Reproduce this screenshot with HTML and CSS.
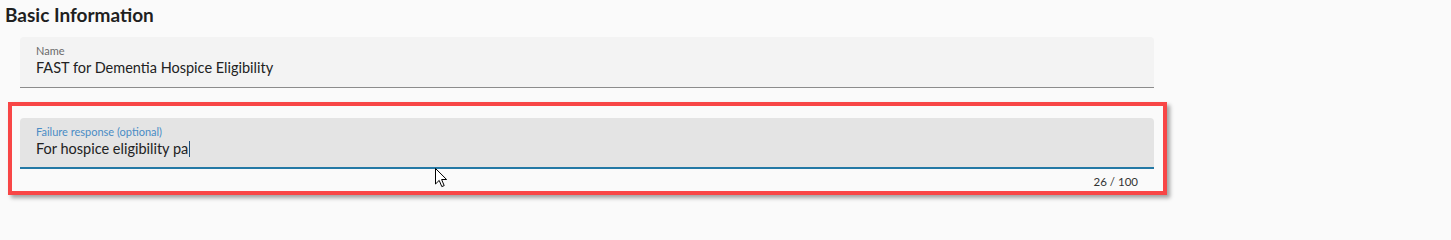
FILE: index.html
```html
<!DOCTYPE html>
<html lang="en">
<head>
<meta charset="utf-8">
<title>Basic Information</title>
<link rel="stylesheet" href="styles.css">
</head>
<body>
<div class="page">
  <h2 class="title">Basic Information</h2>
  <div class="form">
    <div class="field">
      <div class="label">Name</div>
      <div class="value">FAST for Dementia Hospice Eligibility</div>
    </div>
    <div class="highlight">
      <div class="field field-focused">
        <div class="label label-focused">Failure response (optional)</div>
        <div class="value">For hospice eligibility pa<span class="caret"></span></div>
      </div>
      <div class="helper">26 / 100</div>
      <svg class="pointer" width="13" height="20" viewBox="0 0 13 20">
        <path d="M0.5 0.5 L0.5 16 L4.2 12.4 L6.8 18.6 L9.2 17.6 L6.6 11.5 L11.6 11.5 Z" fill="#fff" stroke="#000" stroke-width="1"/>
      </svg>
    </div>
  </div>
</div>
</body>
</html>
```
FILE: styles.css
```css
html, body {
  margin: 0;
  padding: 0;
  background: #fafafa;
}
body {
  min-height: 206px;
  font-family: Lato, "Open Sans", sans-serif;
  color: #222;
}
.page {
  padding: 3px 0 12px 5px;
}
.title {
  margin: 0;
  font-size: 19px;
  line-height: 23px;
  font-weight: 700;
  color: #1f1f1f;
}
.form {
  margin: 11px 0 0 15px;
  width: 1134px;
}
.field {
  box-sizing: border-box;
  height: 51px;
  padding: 7px 16px 0 16px;
  background: #f3f3f3;
  border-radius: 4px 4px 0 0;
  border-bottom: 1px solid #8c8c8c;
}
.field-focused {
  background: #e4e4e4;
  border-bottom: 2px solid #2479a5;
}
.label {
  font-size: 11px;
  line-height: 13px;
  color: #6a6a6a;
}
.label-focused {
  color: #4a8cc4;
}
.value {
  margin-top: 1px;
  font-size: 14.5px;
  line-height: 19px;
  color: #222;
}
.caret {
  display: inline-block;
  width: 1px;
  height: 16px;
  margin-left: 1px;
  background: #1d4f7d;
  vertical-align: -3px;
}
.highlight {
  position: relative;
  margin-top: 30px;
}
.highlight::after {
  content: "";
  position: absolute;
  top: -16px;
  left: -12px;
  right: -13px;
  bottom: -7px;
  border: 4px solid #f84646;
  box-shadow: 3px 3px 4px rgba(0, 0, 0, 0.35);
  pointer-events: none;
}
.helper {
  padding: 6px 16px 0 0;
  text-align: right;
  font-size: 11.5px;
  line-height: 13px;
  color: #333;
}
.pointer {
  position: absolute;
  left: 415px;
  top: 50px;
}
```
